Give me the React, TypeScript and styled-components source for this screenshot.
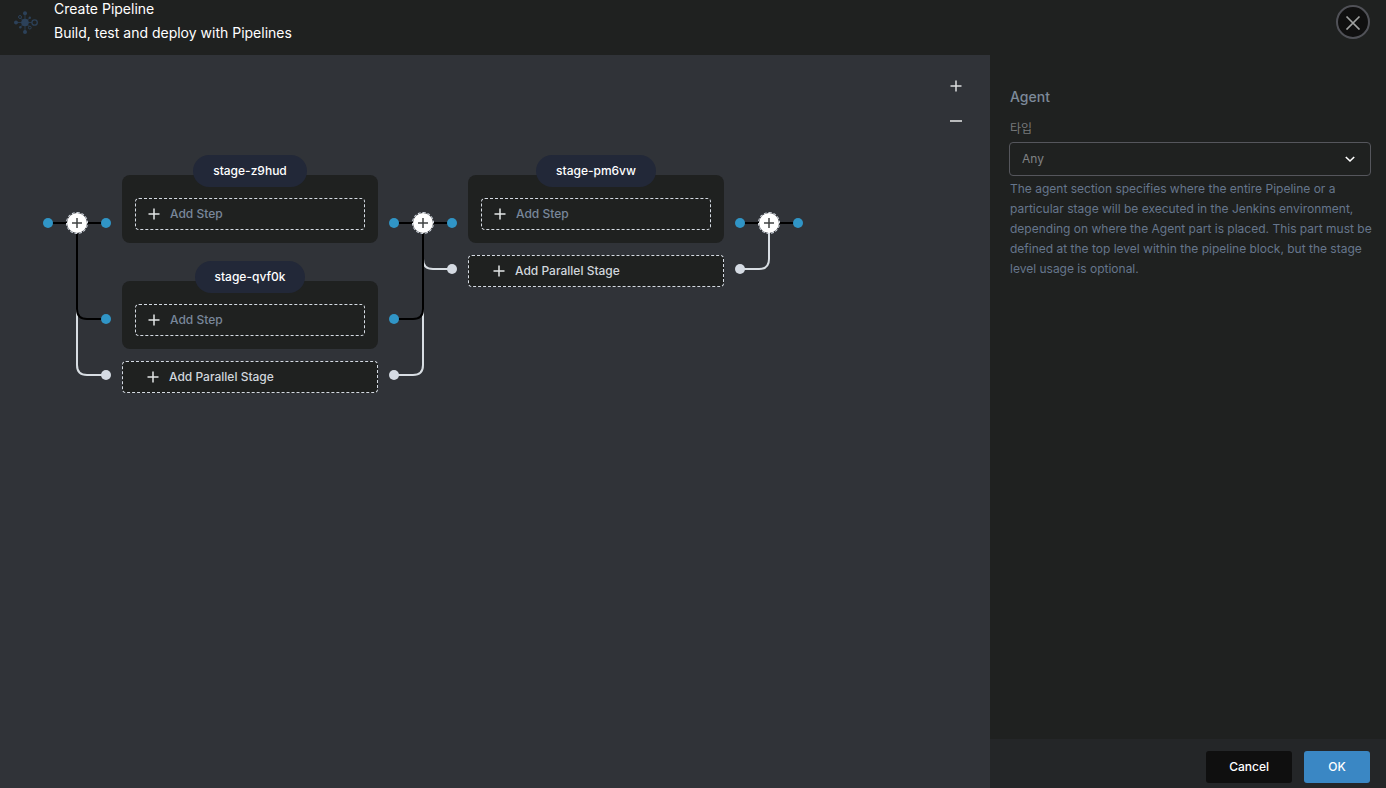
import React from "react";
import styled, { createGlobalStyle } from "styled-components";

const GlobalStyle = createGlobalStyle`
  *, *::before, *::after { box-sizing: border-box; }
  body {
    margin: 0;
    background: #303338;
    font-family: Inter, "Noto Sans CJK KR", sans-serif;
    font-size: 12px;
    line-height: 20px;
  }
  button, select { font: inherit; }
  h1, h2, p { margin: 0; }
`;

const Page = styled.div`
  display: flex;
  flex-direction: column;
  min-height: 100vh;
`;

const Header = styled.header`
  display: flex;
  align-items: flex-start;
  min-height: 55px;
  padding: 0 16px 0 14px;
  background: #1f2120;
  color: #fff;
`;

const Logo = styled.svg`
  flex: none;
  width: 24px;
  height: 24px;
  margin: 10px 16px 0 0;
  color: #2c4159;
`;

const Titles = styled.div`
  display: flex;
  flex: 1;
  flex-direction: column;
  gap: 6px;
  font-size: 14px;
  line-height: 18px;
`;

const Title = styled.h1`
  font-size: 14px;
  font-weight: 400;
`;

const CloseButton = styled.button`
  display: flex;
  align-items: center;
  justify-content: center;
  width: 34px;
  height: 34px;
  margin-top: 5px;
  padding: 0;
  border: 2px solid #505157;
  border-radius: 50%;
  background: #101010;
  color: #a0a2a1;
`;

const Body = styled.div`
  display: flex;
  flex: 1;
`;

const Canvas = styled.main`
  position: relative;
  flex: 1;
  min-width: 0;
  padding: 100px 32px 32px;
  background: #303338;
`;

const ZoomControls = styled.div`
  position: absolute;
  top: 21px;
  right: 24px;
  display: flex;
  flex-direction: column;
  gap: 15px;
`;

const IconButton = styled.button`
  display: flex;
  align-items: center;
  justify-content: center;
  width: 20px;
  height: 20px;
  padding: 0;
  border: 0;
  background: transparent;
  color: #dcdede;
`;

const Pipeline = styled.div`
  display: flex;
  align-items: flex-start;
`;

const StageColumn = styled.section`
  width: 256px;
  flex: none;
`;

const StageBlock = styled.div`
  display: flex;
  flex-direction: column;
  align-items: center;

  & + & { margin-top: 18px; }
`;

const StageName = styled.h2`
  z-index: 1;
  margin-bottom: -12px;
  padding: 6px 20px;
  border-radius: 16px;
  background: #222838;
  color: #fff;
  font-size: 12px;
  font-weight: 500;
`;

const StageCard = styled.div`
  width: 100%;
  padding: 23px 13px 13px;
  border-radius: 8px;
  background: #1f2120;
`;

const DashedButton = styled.button<{ $parallel?: boolean }>`
  display: flex;
  align-items: center;
  gap: 8px;
  width: 100%;
  height: 32px;
  margin-top: ${(p) => (p.$parallel ? "12px" : "0")};
  padding: 0 ${(p) => (p.$parallel ? "22px" : "10px")};
  border: 1px dashed #d5dbe3;
  border-radius: 4px;
  background: #1f2120;
  color: ${(p) => (p.$parallel ? "#d1d6dc" : "#79879a")};
  font-weight: 500;

  svg { color: #e4e6e6; }
`;

const ConnectorBox = styled.div`
  position: relative;
  flex: none;
  width: 90px;
`;

const Wires = styled.svg`
  display: block;
`;

const NodeButton = styled.button`
  position: absolute;
  top: 57px;
  left: 34px;
  display: flex;
  align-items: center;
  justify-content: center;
  width: 22px;
  height: 22px;
  padding: 0;
  border: 1px dashed #d5dbe3;
  border-radius: 50%;
  background: #fff;
  background-clip: padding-box;
  color: #404343;
`;

const Panel = styled.aside`
  display: flex;
  flex-direction: column;
  width: 396px;
  flex: none;
  background: #1f2120;
`;

const PanelForm = styled.form`
  flex: 1;
  padding: 32px 15px 20px 19px;
`;

const PanelTitle = styled.h2`
  padding-left: 1px;
  color: #7d8a99;
  font-size: 14px;
  font-weight: 500;
`;

const Label = styled.label`
  display: block;
  margin: 12px 0 3px;
  padding-left: 1px;
  color: #77797b;
`;

const SelectBox = styled.div`
  position: relative;
  color: #fff;

  svg {
    position: absolute;
    top: 9px;
    right: 13px;
    pointer-events: none;
  }
`;

const Select = styled.select`
  display: block;
  width: 100%;
  height: 34px;
  padding: 0 36px 0 12px;
  border: 1px solid #55565c;
  border-radius: 4px;
  appearance: none;
  background: transparent;
  color: #808284;
`;

const Help = styled.p`
  margin: 3px -8px 0 0;
  padding-left: 1px;
  color: #66768c;
`;

const Footer = styled.footer`
  display: flex;
  justify-content: flex-end;
  gap: 12px;
  padding: 12px 16px 5px;
  background: #242628;
`;

const ActionButton = styled.button<{ $primary?: boolean }>`
  min-width: 66px;
  height: 32px;
  padding: 0 23px;
  border: 0;
  border-radius: 3px;
  background: ${(p) => (p.$primary ? "#3a87c4" : "#0f0f0f")};
  color: #fff;
  font-weight: 500;
`;

const PlusIcon = ({ arm = 5.5, size = 16 }: { arm?: number; size?: number }) => (
  <svg width={size} height={size} viewBox="-8 -8 16 16" fill="none" stroke="currentColor" strokeWidth="1.5" aria-hidden="true">
    <path d={`M${-arm} 0H${arm}M0 ${-arm}V${arm}`} />
  </svg>
);

type Branch = { y: number; tone: "stage" | "add" };

const MAIN_Y = 68;
const CENTER_X = 45;
const tones = {
  stage: { line: "#000", dot: "#3095c6" },
  add: { line: "#d8dee3", dot: "#d5dbe3" },
};

function Connector({ left = [], right = [], label }: { left?: Branch[]; right?: Branch[]; label: string }) {
  const branches = [
    ...left.map((b) => ({ ...b, dir: -1 })),
    ...right.map((b) => ({ ...b, dir: 1 })),
  ].sort((a, b) => (a.tone === b.tone ? 0 : a.tone === "add" ? -1 : 1));
  const height = Math.max(MAIN_Y, ...branches.map((b) => b.y)) + 8;
  return (
    <ConnectorBox>
      <Wires width="90" height={height} fill="none" strokeWidth="2" aria-hidden="true">
        {branches.map((b) => {
          const end = CENTER_X + b.dir * 29;
          return (
            <g key={`${b.dir}-${b.y}`}>
              <path
                stroke={tones[b.tone].line}
                d={`M${CENTER_X} ${MAIN_Y}V${b.y - 10}Q${CENTER_X} ${b.y} ${CENTER_X + b.dir * 10} ${b.y}H${end}`}
              />
              <circle cx={end} cy={b.y} r="5" fill={tones[b.tone].dot} />
            </g>
          );
        })}
        <path stroke="#000" d={`M16 ${MAIN_Y}H74`} />
        <circle cx="16" cy={MAIN_Y} r="5" fill={tones.stage.dot} />
        <circle cx="74" cy={MAIN_Y} r="5" fill={tones.stage.dot} />
      </Wires>
      <NodeButton type="button" aria-label={label}>
        <PlusIcon arm={5} />
      </NodeButton>
    </ConnectorBox>
  );
}

function StageGroup({ names }: { names: string[] }) {
  return (
    <StageColumn>
      {names.map((name) => (
        <StageBlock key={name}>
          <StageName>{name}</StageName>
          <StageCard>
            <DashedButton type="button">
              <PlusIcon />
              Add Step
            </DashedButton>
          </StageCard>
        </StageBlock>
      ))}
      <DashedButton type="button" $parallel>
        <PlusIcon />
        Add Parallel Stage
      </DashedButton>
    </StageColumn>
  );
}

const twoStages: Branch[] = [
  { y: 164, tone: "stage" },
  { y: 220, tone: "add" },
];
const oneStage: Branch[] = [{ y: 114, tone: "add" }];

export default function App() {
  return (
    <>
      <GlobalStyle />
      <Page>
        <Header>
          <Logo viewBox="0 0 24 24" fill="currentColor" stroke="currentColor" aria-hidden="true">
            <path d="M11 3v18M2 12.5h16M6.5 8l9 9M15.5 8l-9 9" strokeWidth=".8" />
            <g stroke="none">
              <circle cx="11" cy="12.5" r="3.8" />
              <circle cx="11" cy="3.3" r="2" />
              <circle cx="11" cy="22" r="2" />
              <circle cx="2" cy="12.5" r="2" />
              <circle cx="15.8" cy="7.7" r="1.2" />
              <circle cx="6.3" cy="17.2" r="1.2" />
            </g>
            <g fill="#1f2120">
              <circle cx="20.6" cy="12.5" r="2.7" strokeWidth="1.3" />
              <circle cx="6" cy="7" r="1.5" />
              <circle cx="15.8" cy="17.6" r="1.4" />
            </g>
          </Logo>
          <Titles>
            <Title>Create Pipeline</Title>
            <p>Build, test and deploy with Pipelines</p>
          </Titles>
          <CloseButton type="button" aria-label="Close">
            <svg width="16" height="16" viewBox="0 0 16 16" fill="none" stroke="currentColor" strokeWidth="1.7" aria-hidden="true">
              <path d="M1.5 2.5l13 13M14.5 2.5l-13 13" />
            </svg>
          </CloseButton>
        </Header>
        <Body>
          <Canvas>
            <ZoomControls>
              <IconButton type="button" aria-label="Zoom in">
                <PlusIcon />
              </IconButton>
              <IconButton type="button" aria-label="Zoom out">
                <svg width="16" height="16" viewBox="-8 -8 16 16" stroke="currentColor" strokeWidth="1.6" aria-hidden="true">
                  <path d="M-6 0H6" />
                </svg>
              </IconButton>
            </ZoomControls>
            <Pipeline>
              <Connector right={twoStages} label="Add stage at start" />
              <StageGroup names={["stage-z9hud", "stage-qvf0k"]} />
              <Connector left={twoStages} right={oneStage} label="Add stage between" />
              <StageGroup names={["stage-pm6vw"]} />
              <Connector left={oneStage} label="Add stage at end" />
            </Pipeline>
          </Canvas>
          <Panel>
            <PanelForm id="agent-form">
              <PanelTitle>Agent</PanelTitle>
              <Label htmlFor="agent-type">타입</Label>
              <SelectBox>
                <Select id="agent-type" defaultValue="any">
                  <option value="any">Any</option>
                </Select>
                <svg width="16" height="16" viewBox="0 0 16 16" fill="none" stroke="currentColor" strokeWidth="1.6" aria-hidden="true">
                  <path d="M3.8 6l4.2 4 4.2-4" />
                </svg>
              </SelectBox>
              <Help>
                The agent section specifies where the entire Pipeline or a particular stage will be executed in the
                Jenkins environment, depending on where the Agent part is placed. This part must be defined at the top
                level within the pipeline block, but the stage level usage is optional.
              </Help>
            </PanelForm>
            <Footer>
              <ActionButton type="button">Cancel</ActionButton>
              <ActionButton type="submit" form="agent-form" $primary>
                OK
              </ActionButton>
            </Footer>
          </Panel>
        </Body>
      </Page>
    </>
  );
}
